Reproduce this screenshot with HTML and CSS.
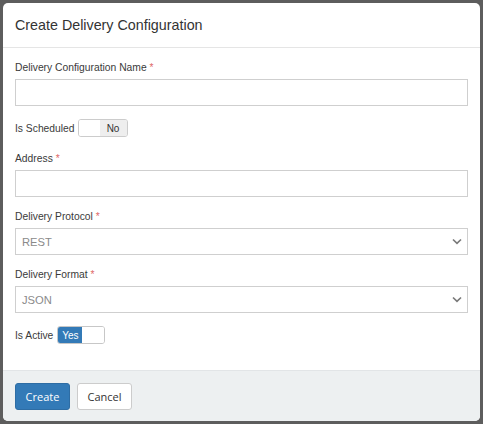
FILE: index.html
```html
<!DOCTYPE html>
<html>
<head>
<meta charset="utf-8">
<link rel="stylesheet" href="styles.css">
</head>
<body>
<div class="modal">
  <div class="modal-header">Create Delivery Configuration</div>
  <div class="modal-body">
    <div class="group">
      <label class="label">Delivery Configuration Name <span class="req">*</span></label>
      <div class="input"></div>
    </div>
    <div class="toggle-row">
      <span class="tlabel">Is Scheduled</span>
      <span class="toggle off"><span class="handle"></span><span class="state">No</span></span>
    </div>
    <div class="group">
      <label class="label">Address <span class="req">*</span></label>
      <div class="input"></div>
    </div>
    <div class="group">
      <label class="label">Delivery Protocol <span class="req">*</span></label>
      <div class="input select"><span class="value">REST</span>
        <svg class="chev" width="10" height="7" viewBox="0 0 10 7"><path d="M1 1.5 L5 5.3 L9 1.5" fill="none" stroke="#7a7a7a" stroke-width="1.7"/></svg>
      </div>
    </div>
    <div class="group">
      <label class="label">Delivery Format <span class="req">*</span></label>
      <div class="input select"><span class="value">JSON</span>
        <svg class="chev" width="10" height="7" viewBox="0 0 10 7"><path d="M1 1.5 L5 5.3 L9 1.5" fill="none" stroke="#7a7a7a" stroke-width="1.7"/></svg>
      </div>
    </div>
    <div class="toggle-row last">
      <span class="tlabel">Is Active</span>
      <span class="toggle on"><span class="state">Yes</span><span class="handle"></span></span>
    </div>
  </div>
  <div class="modal-footer">
    <button class="btn primary">Create</button>
    <button class="btn default">Cancel</button>
  </div>
</div>
</body>
</html>
```

FILE: styles.css
```css
html, body {
  margin: 0;
  padding: 0;
}
body {
  background: #5d5d5d;
  width: 483px;
  height: 424px;
  overflow: hidden;
  font-family: "Liberation Sans", Arial, sans-serif;
  color: #333;
}
.modal {
  margin: 3px 0 0 3px;
  width: 477px;
  height: 418px;
  background: #fff;
  border-radius: 5px;
  display: flex;
  flex-direction: column;
  overflow: hidden;
}
.modal-header {
  height: 45px;
  box-sizing: border-box;
  border-bottom: 1px solid #e5e5e5;
  padding: 0 12px;
  display: flex;
  align-items: center;
  font-size: 14.3px;
  color: #333;
}
.modal-body {
  flex: 1;
  padding: 13px 12px 0 12px;
  display: flex;
  flex-direction: column;
}
.group {
  display: flex;
  flex-direction: column;
  margin-bottom: 13px;
}
.label {
  display: block;
  font-size: 10.3px;
  line-height: 14px;
  margin-bottom: 4px;
  color: #3a3a3a;
}
.req {
  color: #e06a6a;
}
.input {
  height: 27px;
  box-sizing: border-box;
  border: 1px solid #cfcfcf;
  background: #fff;
}
.select {
  display: flex;
  align-items: center;
  justify-content: space-between;
  padding: 0 5px 0 6px;
}
.value {
  font-size: 11.2px;
  color: #8a8a8a;
}
.chev {
  display: block;
}
.toggle-row {
  display: flex;
  align-items: center;
  height: 18px;
  margin-bottom: 15px;
}
.toggle-row.last {
  margin-bottom: 0;
}
.tlabel {
  font-size: 10.3px;
  margin-right: 3px;
  color: #3a3a3a;
}
.toggle-row.last .tlabel {
  margin-right: 4px;
}
.toggle {
  display: flex;
  height: 18px;
  box-sizing: border-box;
  border: 1px solid #cccccc;
  border-radius: 3px;
  overflow: hidden;
  font-size: 10px;
}
.toggle .handle {
  background: #fff;
}
.toggle.off .handle {
  width: 21px;
}
.toggle.off .state {
  width: 27px;
  background: #eeeeee;
  color: #333;
  display: flex;
  align-items: center;
  justify-content: center;
}
.toggle.on {
  border-color: #c7c7c7;
}
.toggle.on .state {
  width: 24px;
  background: #337ab7;
  color: #fff;
  display: flex;
  align-items: center;
  justify-content: center;
}
.toggle.on .handle {
  width: 22px;
}
.modal-footer {
  height: 51px;
  box-sizing: border-box;
  border-top: 1px solid #e2e5e7;
  background: #edf0f1;
  padding: 12px 12px 0 12px;
  display: flex;
  align-items: flex-start;
  gap: 7px;
}
.btn {
  height: 27px;
  width: 55px;
  box-sizing: border-box;
  border-radius: 3px;
  font-family: "Open Sans", "Liberation Sans", sans-serif;
  font-size: 11px;
  padding: 0;
  margin: 0;
}
.btn.primary {
  background: #337ab7;
  border: 1px solid #2e6da4;
  color: #fff;
}
.btn.default {
  background: #fff;
  border: 1px solid #ccc;
  color: #333;
}
```
